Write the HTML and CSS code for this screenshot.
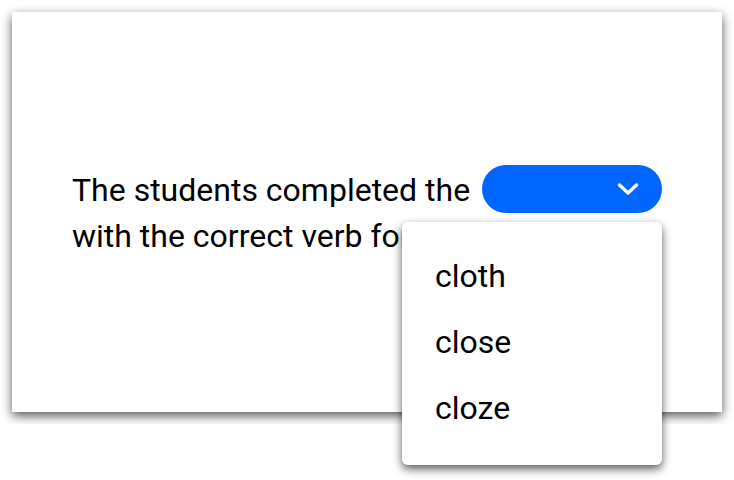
FILE: index.html
```html
<!DOCTYPE html>
<html>
<head>
<meta charset="utf-8">
<link rel="stylesheet" href="styles.css">
</head>
<body>
<div class="card">
  <p class="sentence">The students completed the <span class="select"><svg class="chev" width="22" height="12" viewBox="0 0 22 12"><path d="M2.5 2 L11 10 L19.5 2" fill="none" stroke="#fff" stroke-width="3.4" stroke-linecap="round" stroke-linejoin="round"/></svg></span> with the correct verb forms.</p>
</div>
<ul class="menu">
  <li>cloth</li>
  <li>close</li>
  <li>cloze</li>
</ul>
</body>
</html>
```
FILE: styles.css
```css
html, body { margin: 0; padding: 0; background: #fff; }
body { padding: 12px; font-family: Roboto, "Noto Sans", sans-serif; color: #000; }
.card {
  width: 710px;
  height: 400px;
  box-sizing: border-box;
  background: #fff;
  box-shadow: 0 4px 10px rgba(0,0,0,0.65);
  display: flex;
  align-items: center;
  padding: 0 50px 0 60px;
}
.sentence {
  margin: 0;
  font-size: 32px;
  line-height: 46px;
}
.select {
  display: inline-block;
  width: 180px;
  height: 48px;
  margin-left: 4px;
  border-radius: 24px;
  background: #0066ff;
  vertical-align: -12px;
  position: relative;
}
.chev { position: absolute; right: 23px; top: 18px; }
.menu {
  position: absolute;
  left: 402px;
  top: 222px;
  width: 260px;
  height: 243px;
  box-sizing: border-box;
  margin: 0;
  padding: 21px 0;
  list-style: none;
  background: #fff;
  border-radius: 6px;
  box-shadow: 0 4px 10px rgba(0,0,0,0.65);
  font-size: 32px;
}
.menu li {
  height: 66px;
  line-height: 66px;
  padding-left: 33px;
}
```
